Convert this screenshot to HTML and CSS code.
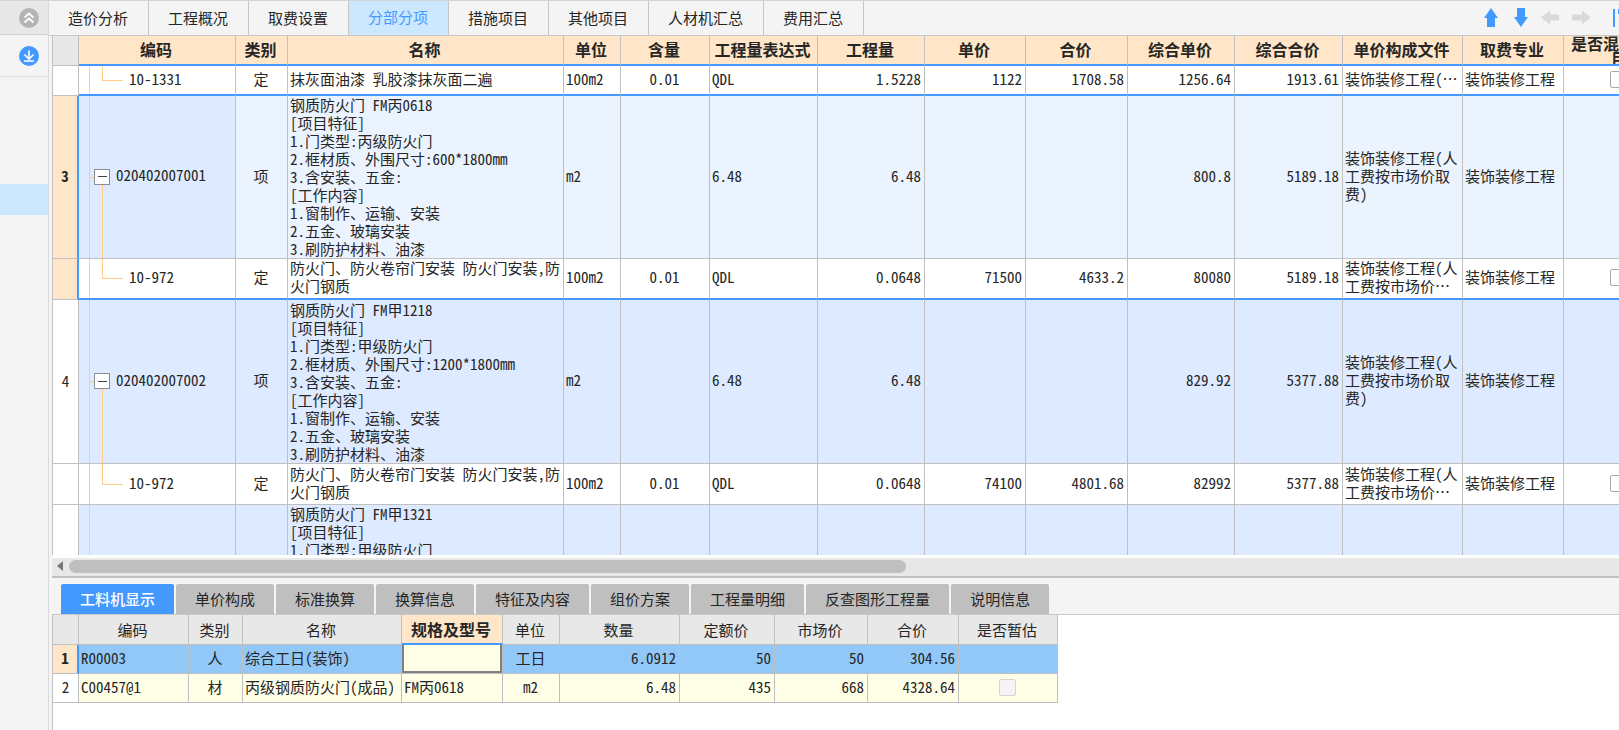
FILE: index.html
```html
<!DOCTYPE html>
<html lang="zh-CN">
<head>
<meta charset="utf-8">
<title>分部分项</title>
<link rel="stylesheet" href="styles.css">
</head>
<body>
<div class="app">
  <aside class="side">
    <div class="side-top">
      <button class="round" aria-label="收起"><svg viewBox="0 0 20 20" width="20" height="20"><circle cx="10" cy="10" r="10" fill="#b4b4b4"/><path d="M5.5 9.5 10 5.5l4.5 4M5.5 14.5l4.5-4 4.5 4" fill="none" stroke="#fff" stroke-width="1.8"/></svg></button>
    </div>
    <div class="side-tool">
      <button class="round" aria-label="下载"><svg viewBox="0 0 20 20" width="20" height="20"><circle cx="10" cy="10" r="10" fill="#4499ff"/><path d="M10 4.5v8M5.5 8.5l4.5 4.5 4.5-4.5M5 15h10" fill="none" stroke="#fff" stroke-width="1.6"/></svg></button>
    </div>
    <div class="side-list"><div class="side-current"></div></div>
  </aside>
  <main class="main">
    <header class="top">
      <nav class="tabs">
        <button class="tab">造价分析</button><button class="tab">工程概况</button><button class="tab">取费设置</button><button class="tab tab-on">分部分项</button><button class="tab">措施项目</button><button class="tab">其他项目</button><button class="tab">人材机汇总</button><button class="tab">费用汇总</button>
      </nav>
      <div class="tools">
        <button class="tool" aria-label="上移"><svg viewBox="0 0 20 20" width="20" height="20"><path d="M10 0 17 10h-3v9H6v-9H3z" fill="#4499ff"/></svg></button>
        <button class="tool" aria-label="下移"><svg viewBox="0 0 20 20" width="20" height="20"><path d="M10 19 3 9h3V0h8v9h3z" fill="#4499ff"/></svg></button>
        <button class="tool" aria-label="左移"><svg viewBox="0 0 20 20" width="20" height="20"><path d="M0 9.500 9 2.500v4h9v6H9v4z" fill="#d9d9d9"/></svg></button>
        <button class="tool" aria-label="右移"><svg viewBox="0 0 20 20" width="20" height="20"><path d="M20 9.500 11 2.500v4H1v6h10v4z" fill="#d9d9d9"/></svg></button>
        <button class="tool tool-cut" aria-label="列设置"><svg viewBox="0 0 6 20" width="6" height="20"><path d="M0 1h2v18H0zM5 1h1v5H5z" fill="#4499ff"/></svg></button>
      </div>
    </header>

    <section class="grid-view">
      <table class="grid bill">
        <colgroup><col class="w26"><col class="w157"><col class="w52"><col class="w276"><col class="w57"><col class="w89"><col class="w108"><col class="w107"><col class="w101"><col class="w102"><col class="w107"><col class="w108"><col class="w120"><col class="w101"><col class="w111"></colgroup>
        <thead>
          <tr><th class="corner"></th><th>编码</th><th>类别</th><th>名称</th><th>单位</th><th>含量</th><th>工程量表达式</th><th>工程量</th><th>单价</th><th>合价</th><th>综合单价</th><th>综合合价</th><th>单价构成文件</th><th>取费专业</th><th class="tall"><div>是否混凝土项目</div></th></tr>
        </thead>
        <tbody>
          <tr class="leaf first"><td class="no"></td><td class="code child">10-1331</td><td class="mid">定</td><td>抹灰面油漆 乳胶漆抹灰面二遍</td><td>100m2</td><td class="mid">0.01</td><td>QDL</td><td class="num">1.5228</td><td class="num">1122</td><td class="num">1708.58</td><td class="num">1256.64</td><td class="num">1913.61</td><td>装饰装修工程(⋯</td><td>装饰装修工程</td><td class="mid"><input type="checkbox" aria-label="是否混凝土项目"></td></tr>
          <tr class="item current"><td class="no">3</td><td class="code parent"><button class="fold" aria-label="折叠"></button>020402007001</td><td class="mid">项</td><td class="long">钢质防火门 FM丙0618<br>[项目特征]<br>1.门类型:丙级防火门<br>2.框材质、外围尺寸:600*1800mm<br>3.含安装、五金:<br>[工作内容]<br>1.窗制作、运输、安装<br>2.五金、玻璃安装<br>3.刷防护材料、油漆</td><td>m2</td><td></td><td>6.48</td><td class="num">6.48</td><td></td><td></td><td class="num">800.8</td><td class="num">5189.18</td><td>装饰装修工程(人<br>工费按市场价取<br>费)</td><td>装饰装修工程</td><td></td></tr>
          <tr class="leaf current last"><td class="no"></td><td class="code child">10-972</td><td class="mid">定</td><td>防火门、防火卷帘门安装 防火门安装,防<br>火门钢质</td><td>100m2</td><td class="mid">0.01</td><td>QDL</td><td class="num">0.0648</td><td class="num">71500</td><td class="num">4633.2</td><td class="num">80080</td><td class="num">5189.18</td><td>装饰装修工程(人<br>工费按市场价⋯</td><td>装饰装修工程</td><td class="mid"><input type="checkbox" aria-label="是否混凝土项目"></td></tr>
          <tr class="item"><td class="no">4</td><td class="code parent"><button class="fold" aria-label="折叠"></button>020402007002</td><td class="mid">项</td><td class="long">钢质防火门 FM甲1218<br>[项目特征]<br>1.门类型:甲级防火门<br>2.框材质、外围尺寸:1200*1800mm<br>3.含安装、五金:<br>[工作内容]<br>1.窗制作、运输、安装<br>2.五金、玻璃安装<br>3.刷防护材料、油漆</td><td>m2</td><td></td><td>6.48</td><td class="num">6.48</td><td></td><td></td><td class="num">829.92</td><td class="num">5377.88</td><td>装饰装修工程(人<br>工费按市场价取<br>费)</td><td>装饰装修工程</td><td></td></tr>
          <tr class="leaf"><td class="no"></td><td class="code child">10-972</td><td class="mid">定</td><td>防火门、防火卷帘门安装 防火门安装,防<br>火门钢质</td><td>100m2</td><td class="mid">0.01</td><td>QDL</td><td class="num">0.0648</td><td class="num">74100</td><td class="num">4801.68</td><td class="num">82992</td><td class="num">5377.88</td><td>装饰装修工程(人<br>工费按市场价⋯</td><td>装饰装修工程</td><td class="mid"><input type="checkbox" aria-label="是否混凝土项目"></td></tr>
          <tr class="item"><td class="no"></td><td class="code trunk"></td><td></td><td class="long">钢质防火门 FM甲1321<br>[项目特征]<br>1.门类型:甲级防火门</td><td></td><td></td><td></td><td></td><td></td><td></td><td></td><td></td><td></td><td></td><td></td></tr>
        </tbody>
      </table>
    </section>

    <div class="scroll">
      <svg class="scroll-arrow" viewBox="0 0 6 10" width="6" height="10"><path d="M6 0v10L0 5z" fill="#77777f"/></svg>
      <div class="track"><div class="thumb"></div></div>
    </div>

    <section class="detail">
      <nav class="subtabs">
        <button class="subtab subtab-on">工料机显示</button><button class="subtab">单价构成</button><button class="subtab">标准换算</button><button class="subtab">换算信息</button><button class="subtab">特征及内容</button><button class="subtab">组价方案</button><button class="subtab">工程量明细</button><button class="subtab">反查图形工程量</button><button class="subtab">说明信息</button>
      </nav>
      <div class="detail-body">
        <table class="grid parts">
          <colgroup><col class="w26"><col class="w110"><col class="w54"><col class="w159"><col class="w101"><col class="w57"><col class="w120"><col class="w95"><col class="w93"><col class="w91"><col class="w99"></colgroup>
          <thead>
            <tr><th></th><th>编码</th><th>类别</th><th>名称</th><th class="hot">规格及型号</th><th>单位</th><th>数量</th><th>定额价</th><th>市场价</th><th>合价</th><th>是否暂估</th></tr>
          </thead>
          <tbody>
            <tr class="picked"><td class="no">1</td><td>R00003</td><td class="mid">人</td><td>综合工日(装饰)</td><td class="editing"><input class="edit" type="text" aria-label="规格及型号"></td><td class="mid">工日</td><td class="num">6.0912</td><td class="num">50</td><td class="num">50</td><td class="num">304.56</td><td></td></tr>
            <tr><td class="no">2</td><td>C00457@1</td><td class="mid">材</td><td>丙级钢质防火门(成品)</td><td>FM丙0618</td><td class="mid">m2</td><td class="num">6.48</td><td class="num">435</td><td class="num">668</td><td class="num">4328.64</td><td class="mid"><input type="checkbox" disabled aria-label="是否暂估"></td></tr>
          </tbody>
        </table>
      </div>
    </section>
  </main>
</div>
</body>
</html>
```
FILE: styles.css
```css
* { box-sizing: border-box; }

body {
  margin: 0;
  color: #262626;
  background: #f4f4f4;
  font: 15px/18px "Noto Sans CJK SC", sans-serif;
}

button {
  margin: 0;
  padding: 0;
  border: 0;
  color: inherit;
  background: none;
  font: inherit;
}

svg { display: block; }

.app {
  display: flex;
  height: 100vh;
  overflow: hidden;
  border-top: 1px solid #d4d4d4;
}

/* Side bar */
.side {
  display: flex;
  flex: none;
  flex-direction: column;
  width: 49px;
  border-right: 1px solid #d9d9d9;
}

.side-top,
.side-tool {
  display: flex;
  justify-content: flex-end;
  align-items: center;
  padding-right: 9px;
}

.side-top {
  height: 34px;
  background: #e8e8e8;
  border-bottom: 1px solid #d4d4d4;
}

.side-tool {
  height: 42px;
  border-bottom: 1px solid #dcdcdc;
}

.side-list { padding-top: 107px; }

.side-current {
  height: 31px;
  background: #cce8ff;
}

/* Main column */
.main {
  display: flex;
  flex: 1;
  flex-direction: column;
  min-width: 0;
}

.top {
  display: flex;
  flex: none;
  justify-content: space-between;
  height: 35px;
  border-bottom: 1px solid #c8c8c8;
}

.tabs { display: flex; }

.tab {
  padding: 0 20px 0 19px;
  border-right: 1px solid #c4c4c4;
}

.tab-on {
  padding-bottom: 2px;
  color: #4499ff;
  background: #cce8ff;
}

.tools {
  display: flex;
  align-items: center;
  gap: 10px;
}

.tool-cut { margin-left: 12px; }

.grid-view {
  flex: 1;
  min-height: 0;
  margin-left: 3px;
  overflow: hidden;
  background: #fff;
  border-left: 1px solid #c0c0c0;
}

/* Tables */
.grid {
  table-layout: fixed;
  border-spacing: 0;
  font-feature-settings: "hwid";
}

.bill { width: 1622px; }
.parts { width: 1005px; }

.w26 { width: 26px; }
.w52 { width: 52px; }
.w54 { width: 54px; }
.w57 { width: 57px; }
.w89 { width: 89px; }
.w91 { width: 91px; }
.w93 { width: 93px; }
.w95 { width: 95px; }
.w99 { width: 99px; }
.w101 { width: 101px; }
.w102 { width: 102px; }
.w107 { width: 107px; }
.w108 { width: 108px; }
.w110 { width: 110px; }
.w111 { width: 111px; }
.w120 { width: 120px; }
.w157 { width: 157px; }
.w159 { width: 159px; }
.w276 { width: 276px; }

.grid th,
.grid td {
  padding: 0 3px 3px 2px;
  border-right: 1px solid #c0c0c0;
  border-bottom: 1px solid #c0c0c0;
  text-align: left;
  white-space: nowrap;
}

.grid th {
  padding: 0 2px 2px 0;
  text-align: center;
  font-weight: 400;
}

.grid .mid { text-align: center; }
.grid .num { text-align: right; }
.grid .long { padding-bottom: 0; }

.grid .no {
  padding: 0 0 2px;
  background: #fff;
  text-align: center;
}

.bill th {
  height: 30px;
  background: #ffe6c8;
  border-bottom: 2px solid #4499ff;
  font-size: 16px;
  font-weight: 700;
}

.bill .corner {
  background: #e8e8e8;
  border-bottom: 1px solid #c0c0c0;
}

.bill .tall { padding: 0; }

.tall div {
  height: 28px;
  padding: 0 7px;
  overflow: hidden;
  line-height: 15px;
  white-space: normal;
}

.leaf td { height: 41px; }
.item td { height: 164px; background-color: #deeaff; }
.item:last-child td { vertical-align: top; }

.bill .first td {
  height: 30px;
  border-bottom: 2px solid #4499ff;
}

.bill .first .no { border-bottom: 1px solid #c0c0c0; }

.item.current td { height: 163px; background-color: #ebf3ff; }
.item.current .code { background-color: #deeaff; }

.bill .last td { border-bottom: 2px solid #4499ff; }

.grid .current .no,
.grid .picked .no {
  background: #ffe6c8;
  border-right: 2px solid #4499ff;
  font-weight: 700;
}

.grid .last .no { border-bottom: 1px solid #c0c0c0; }

/* Tree guides in the code column */
.code { background-repeat: no-repeat; }

.grid .child {
  padding-left: 50px;
  background-image: linear-gradient(#ffcc8c, #ffcc8c), linear-gradient(#ffcc8c, #ffcc8c), linear-gradient(#ffcc8c, #ffcc8c);
  background-position: 10px 0, 23px 0, 23px 50%;
  background-size: 1px 100%, 1px 50%, 21px 1px;
}

.grid .parent {
  padding-left: 15px;
  background-image: linear-gradient(#ffcc8c, #ffcc8c), linear-gradient(#ffcc8c, #ffcc8c), linear-gradient(#ffcc8c, #ffcc8c);
  background-position: 10px 0, 23px 100%, 10px 50%;
  background-size: 1px 100%, 1px 50%, 6px 1px;
}

.grid .trunk {
  background-image: linear-gradient(#ffcc8c, #ffcc8c);
  background-position: 10px 0;
  background-size: 1px 100%;
}

.fold {
  width: 16px;
  height: 16px;
  margin-right: 6px;
  border: 1px solid #8c8c8c;
  background: linear-gradient(#444, #444) center / 9px 1px no-repeat #fff;
  vertical-align: middle;
}

input[type="checkbox"] {
  display: block;
  width: 17px;
  height: 17px;
  margin: 1px auto 0;
  appearance: none;
  background: #fff;
  border: 1px solid #a8a8a8;
  border-radius: 2px;
}

input[type="checkbox"]:disabled {
  background: #f4f4f4;
  border-color: #d4d4d4;
}

/* Horizontal scroll bar */
.scroll {
  display: flex;
  flex: none;
  align-items: center;
  gap: 6px;
  height: 23px;
  margin-left: 3px;
  padding: 0 0 2px 5px;
  background: #e8e8e8;
  border-top: 3px solid #fff;
  border-bottom: 2px solid #c0c0c0;
}

.track { flex: 1; }

.thumb {
  width: 54%;
  height: 13px;
  background: #bfbfbf;
  border-radius: 7px;
}

/* Lower panel */
.detail {
  display: flex;
  flex: none;
  flex-direction: column;
  min-height: 152px;
  padding-top: 6px;
}

.subtabs {
  display: flex;
  gap: 2px;
  padding-left: 12px;
}

.subtab {
  height: 30px;
  padding: 0 19px 1px;
  background: #bfbfbf;
  border-radius: 2px 2px 0 0;
}

.subtab-on {
  color: #fff;
  background: #4499ff;
  font-weight: 500;
}

.detail-body {
  flex: 1;
  margin-left: 3px;
  background: #fff;
  border-top: 1px solid #c8c8c8;
  border-left: 1px solid #c0c0c0;
}

.parts th {
  height: 30px;
  padding-bottom: 0;
  background: #e8e8e8;
}

.parts .hot {
  background: #ffe6c8;
  border-bottom: 2px solid #4499ff;
  font-size: 16px;
  font-weight: 700;
}

.parts td {
  height: 29px;
  background: #ffffe8;
}

.parts .picked td { background: #91c8f8; }

.grid .editing { padding: 0; }

.edit {
  display: block;
  width: 100%;
  height: 28px;
  padding: 0 3px;
  background: #ffffe8;
  border: 2px solid #808080;
  border-top: 0;
  font: inherit;
  outline: 0;
}
```
